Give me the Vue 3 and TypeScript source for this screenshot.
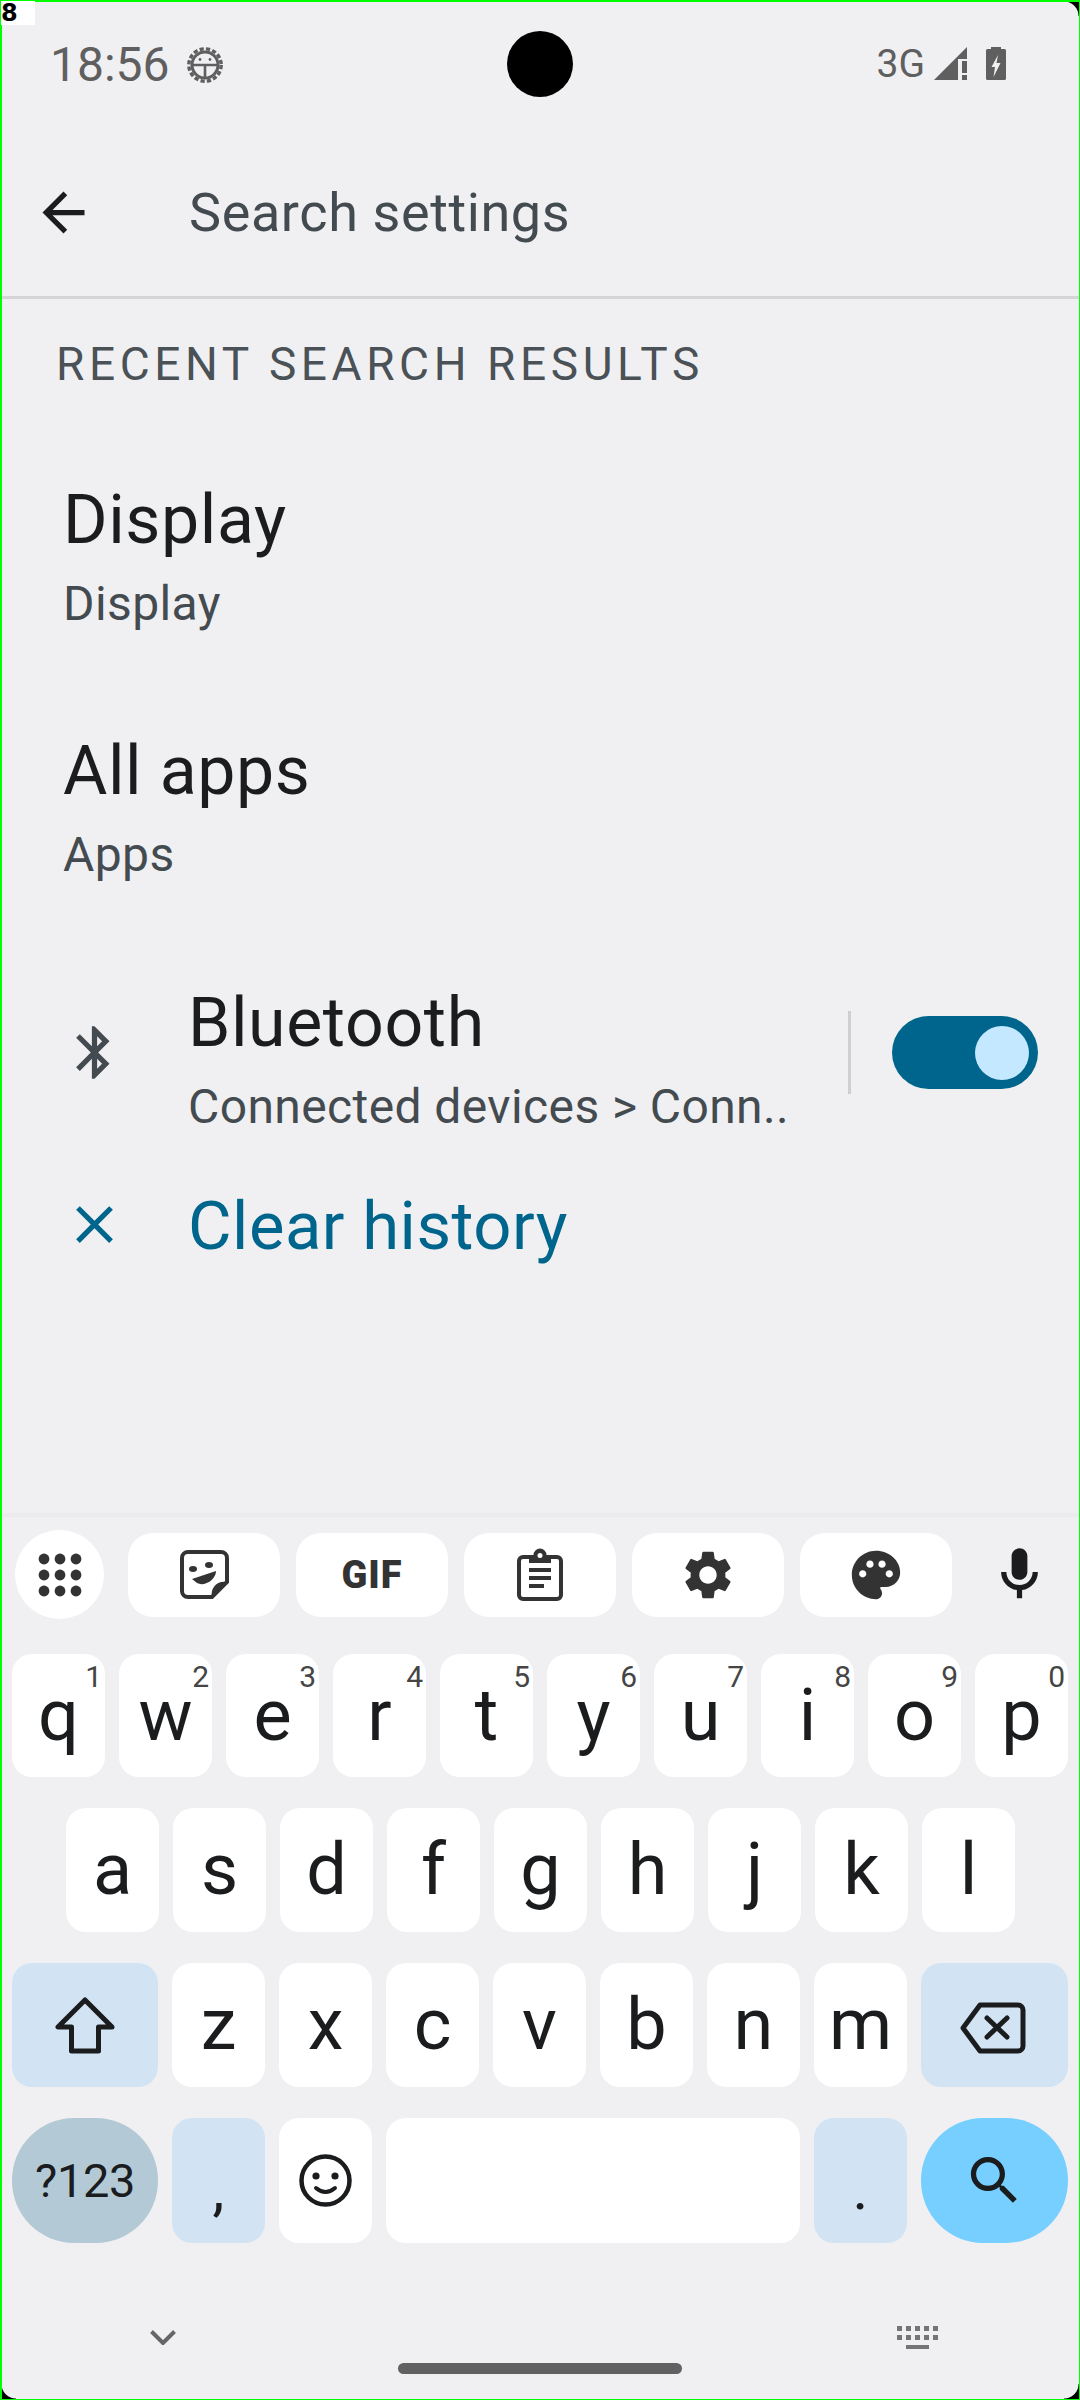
<script setup lang="ts">
const toolbarIcons = ['sticker', 'gif', 'clip', 'gear', 'palette']
const row1: [string, string][] = [['q','1'],['w','2'],['e','3'],['r','4'],['t','5'],['y','6'],['u','7'],['i','8'],['o','9'],['p','0']]
const row2 = ['a','s','d','f','g','h','j','k','l']
const row3 = ['z','x','c','v','b','n','m']
const kbColumns = [0, 9, 18, 27, 36]
</script>

<template>
  <div class="screen">
    <header class="status">
      <span class="time">18:56</span>
      <svg class="bug" viewBox="0 0 36 36" width="36" height="36">
        <circle cx="18" cy="18" r="16.2" fill="none" stroke="#5f5f5f" stroke-width="3.4" stroke-dasharray="4.2 2.2" />
        <circle cx="18" cy="18" r="13" fill="none" stroke="#5f5f5f" stroke-width="3" />
        <path d="M6 18H30M18 18V31" stroke="#5f5f5f" stroke-width="2.6" fill="none" />
        <circle cx="13" cy="12.5" r="1.4" fill="#5f5f5f" />
        <circle cx="23" cy="12.5" r="1.4" fill="#5f5f5f" />
      </svg>
      <span class="grow"></span>
      <span class="net">3G</span>
      <svg class="signal" viewBox="0 0 33 33" width="33" height="33">
        <path d="M0 33L33 0V12H24V33Z" fill="#5f5f5f" />
        <rect x="28" y="14" width="5" height="12" fill="#5f5f5f" />
        <rect x="28" y="28" width="5" height="5" fill="#5f5f5f" />
      </svg>
      <svg class="battery" viewBox="0 0 20 33" width="20" height="33">
        <path d="M5 0H15V2H18.500A1.500 1.500 0 0 1 20 3.500V31.500A1.500 1.500 0 0 1 18.500 33H1.500A1.500 1.500 0 0 1 0 31.500V3.500A1.500 1.500 0 0 1 1.500 2H5Z" fill="#5f5f5f" />
        <path d="M12 8L5.500 20H9L7.500 30L14.500 16H10.500Z" fill="#f0f0f2" />
      </svg>
    </header>

    <div class="topbar">
      <svg viewBox="0 0 24 24" width="63" height="63"><path d="M20 11H7.830l5.590-5.590L12 4l-8 8 8 8 1.410-1.410L7.830 13H20v-2z" fill="#1a1c1e" /></svg>
      <span class="search">Search settings</span>
    </div>
    <div class="rule"></div>

    <main class="content">
      <div class="section">RECENT SEARCH RESULTS</div>
      <div class="result">
        <div class="title">Display</div>
        <div class="sub">Display</div>
      </div>
      <div class="result">
        <div class="title">All apps</div>
        <div class="sub">Apps</div>
      </div>
      <div class="result with-icon">
        <svg viewBox="0 0 24 24" width="63" height="63"><path d="M17.710 7.710L12 2h-1v7.590L6.410 5 5 6.410 10.590 12 5 17.590 6.410 19 11 14.410V22h1l5.710-5.710-4.300-4.290 4.300-4.290zM13 5.830l1.880 1.880L13 9.590V5.830zm1.880 10.460L13 18.170v-3.760l1.880 1.880z" fill="#444b50" /></svg>
        <div class="texts">
          <div class="title">Bluetooth</div>
          <div class="sub">Connected devices &gt; Conn..</div>
        </div>
        <div class="vline"></div>
        <div class="toggle"><span class="thumb"></span></div>
      </div>
      <div class="clear">
        <svg viewBox="0 0 24 24" width="63" height="63"><path d="M19 6.410L17.590 5 12 10.590 6.410 5 5 6.410 10.590 12 5 17.590 6.410 19 12 13.410 17.590 19 19 17.590 13.410 12z" fill="#00658c" /></svg>
        <span class="clear-text">Clear history</span>
      </div>
    </main>

    <section class="kbd">
      <div class="toolbar">
        <div class="apps">
          <svg viewBox="0 0 44 44" width="44" height="44">
            <g fill="#333">
              <circle cx="6" cy="6" r="5.400" /><circle cx="22" cy="6" r="5.400" /><circle cx="38" cy="6" r="5.400" />
              <circle cx="6" cy="22" r="5.400" /><circle cx="22" cy="22" r="5.400" /><circle cx="38" cy="22" r="5.400" />
              <circle cx="6" cy="38" r="5.400" /><circle cx="22" cy="38" r="5.400" /><circle cx="38" cy="38" r="5.400" />
            </g>
          </svg>
        </div>
        <div class="pills">
          <div v-for="icon in toolbarIcons" :key="icon" class="pill">
            <svg v-if="icon === 'sticker'" viewBox="0 0 49 49" width="49" height="49">
              <path d="M8 2H41A6 6 0 0 1 47 8V32L32 47H8A6 6 0 0 1 2 41V8A6 6 0 0 1 8 2Z" fill="none" stroke="#333" stroke-width="4" />
              <path d="M47 32L32 47C30 38 37 30 47 32Z" fill="#333" />
              <ellipse cx="13" cy="19" rx="4" ry="3" fill="#333" />
              <ellipse cx="29" cy="15" rx="4" ry="3" fill="#333" />
              <path d="M12 29L36 21C36 30 24 37 17 33Z" fill="#333" />
            </svg>
            <span v-else-if="icon === 'gif'" class="gif">GIF</span>
            <svg v-else-if="icon === 'clip'" viewBox="0 0 46 53" width="46" height="53">
              <rect x="2" y="9" width="42" height="42" rx="4" fill="none" stroke="#333" stroke-width="4" />
              <path d="M12 7H16.500A6.500 6.500 0 0 1 29.500 7H34V15H12Z" fill="#333" />
              <circle cx="23" cy="7.500" r="2.500" fill="#fff" />
              <path d="M12 22H34M12 30H34M12 38H27" stroke="#333" stroke-width="4" fill="none" />
            </svg>
            <svg v-else-if="icon === 'gear'" viewBox="0 0 24 24" width="58" height="58"><path d="M19.140 12.940c.04-.3.06-.61.06-.94 0-.32-.02-.64-.07-.94l2.030-1.580c.18-.14.23-.41.12-.61l-1.920-3.320c-.12-.22-.37-.29-.59-.22l-2.390.96c-.5-.38-1.030-.7-1.620-.94l-.36-2.540c-.04-.24-.24-.41-.48-.41h-3.840c-.24 0-.43.17-.47.41l-.36 2.540c-.59.24-1.130.57-1.620.94l-2.390-.96c-.22-.08-.47 0-.59.22L2.740 8.870c-.12.21-.08.47.12.61l2.030 1.580c-.05.3-.09.63-.09.94s.02.64.07.94l-2.030 1.580c-.18.14-.23.41-.12.61l1.920 3.320c.12.22.37.29.59.22l2.390-.96c.5.38 1.030.7 1.620.94l.36 2.540c.05.24.24.41.48.41h3.840c.24 0 .44-.17.47-.41l.36-2.540c.59-.24 1.130-.56 1.620-.94l2.390.96c.22.08.47 0 .59-.22l1.920-3.320c.12-.22.07-.47-.12-.61l-2.010-1.580zM12 15.600c-1.980 0-3.600-1.620-3.600-3.600s1.620-3.600 3.600-3.600 3.600 1.620 3.600 3.600-1.620 3.600-3.600 3.600z" fill="#333" /></svg>
            <svg v-else viewBox="0 0 24 24" width="58" height="58"><path d="M12 2C6.490 2 2 6.490 2 12s4.490 10 10 10c1.380 0 2.500-1.120 2.500-2.500 0-.61-.23-1.200-.64-1.670-.08-.1-.13-.21-.13-.33 0-.28.22-.5.5-.5H16c3.310 0 6-2.690 6-6 0-4.960-4.490-9-10-9zm-5.500 11c-.83 0-1.500-.67-1.500-1.500S5.670 10 6.500 10s1.500.67 1.500 1.500S7.330 13 6.500 13zm3-4C8.670 9 8 8.330 8 7.500S8.670 6 9.500 6s1.500.67 1.500 1.500S10.330 9 9.500 9zm5 0c-.83 0-1.500-.67-1.500-1.500S13.670 6 14.500 6s1.500.67 1.500 1.500S15.330 9 14.500 9zm3 4c-.83 0-1.500-.67-1.500-1.500s.67-1.500 1.500-1.500 1.500.67 1.500 1.500-.67 1.500-1.500 1.500z" fill="#333" /></svg>
          </div>
        </div>
        <svg class="mic" viewBox="0 0 24 24" width="63" height="63"><path d="M12 14c1.660 0 3-1.340 3-3V5c0-1.660-1.340-3-3-3S9 3.340 9 5v6c0 1.660 1.340 3 3 3zM17 11c0 2.760-2.240 5-5 5s-5-2.240-5-5H5c0 3.530 2.610 6.430 6 6.920V21h2v-3.080c3.390-.49 6-3.390 6-6.920h-2z" fill="#1a1c1e" /></svg>
      </div>

      <div class="keys">
        <div class="row r1">
          <div v-for="k in row1" :key="k[0]" class="key">
            <span class="letter">{{ k[0] }}</span>
            <span class="hint">{{ k[1] }}</span>
          </div>
        </div>
        <div class="row r2">
          <div v-for="k in row2" :key="k" class="key"><span class="letter">{{ k }}</span></div>
        </div>
        <div class="row r3">
          <div class="key wide func">
            <svg viewBox="0 0 60 57" width="60" height="57">
              <path d="M30 3L3 30H16.500V54H43.500V30H57Z" fill="none" stroke="#1a1c1e" stroke-width="5" stroke-linejoin="round" />
            </svg>
          </div>
          <div v-for="k in row3" :key="k" class="key"><span class="letter">{{ k }}</span></div>
          <div class="key wide func">
            <svg class="backspace" viewBox="0 0 66 52" width="66" height="52">
              <path d="M20 3H58A5 5 0 0 1 63 8V44A5 5 0 0 1 58 49H20L3 26Z" fill="none" stroke="#1a1c1e" stroke-width="5" stroke-linejoin="round" />
              <path d="M27 16L47 35M47 16L27 35" fill="none" stroke="#1a1c1e" stroke-width="5" stroke-linecap="round" />
            </svg>
          </div>
        </div>
        <div class="row r4">
          <div class="key wide sym">?123</div>
          <div class="key func punct">,</div>
          <div class="key">
            <svg viewBox="0 0 53 53" width="53" height="53">
              <circle cx="26.500" cy="26.500" r="24" fill="none" stroke="#1a1c1e" stroke-width="4.500" />
              <circle cx="17" cy="22" r="3.600" fill="#1a1c1e" />
              <circle cx="36" cy="22" r="3.600" fill="#1a1c1e" />
              <path d="M17 34Q26.500 42 36 34" fill="none" stroke="#1a1c1e" stroke-width="4" stroke-linecap="round" />
            </svg>
          </div>
          <div class="key space"></div>
          <div class="key func punct">.</div>
          <div class="key wide go">
            <svg viewBox="0 0 24 24" width="63" height="63"><path d="M15.500 14h-.79l-.28-.27C15.410 12.590 16 11.110 16 9.500 16 5.910 13.090 3 9.500 3S3 5.910 3 9.500 5.910 16 9.500 16c1.610 0 3.090-.59 4.230-1.570l.27.28v.79l5 4.990L20.490 19l-4.990-5zm-6 0C7.010 14 5 11.990 5 9.500S7.010 5 9.500 5 14 7.010 14 9.500 11.990 14 9.500 14z" fill="#1a1c1e" /></svg>
          </div>
        </div>
      </div>

      <div class="nav-icons">
        <svg viewBox="0 0 26 15" width="26" height="15"><path d="M1.500 1.500L13 13L24.500 1.500" fill="none" stroke="#666" stroke-width="4" /></svg>
        <svg viewBox="0 0 41 23" width="41" height="23">
          <g fill="#757575">
            <rect v-for="x in kbColumns" :key="'a' + x" :x="x" y="0" width="5" height="5" />
            <rect v-for="x in kbColumns" :key="'b' + x" :x="x" y="9" width="5" height="5" />
            <rect x="9" y="19" width="23" height="4" />
          </g>
        </svg>
      </div>
      <div class="home"></div>
    </section>

    <div class="corner tl"></div>
    <div class="corner tr"></div>
    <div class="corner bl"></div>
    <div class="corner br"></div>
    <div class="frame"></div>
    <div class="tag">8</div>
  </div>
</template>

<style>
html, body { margin: 0; padding: 0; }
</style>

<style scoped>
.screen {
  position: relative;
  width: 1080px;
  height: 2400px;
  background: #f0f0f2;
  overflow: hidden;
  display: flex;
  flex-direction: column;
  font-family: Roboto, "Noto Sans", sans-serif;
  color: #1a1c1e;
}
.status {
  height: 128px;
  flex: none;
  display: flex;
  align-items: center;
  padding: 0 74px 0 50px;
  color: #5f5f5f;
}
.time { font-size: 48px; line-height: 1; margin-top: 2px; }
.bug { margin-left: 17px; margin-top: 2px; }
.grow { flex: 1; }
.status::after {
  content: "";
  position: absolute;
  left: 507px;
  top: 31px;
  width: 66px;
  height: 66px;
  border-radius: 50%;
  background: #000;
}
.net { font-size: 39px; line-height: 1; margin-right: 9px; margin-top: 1px; }
.signal { margin-right: 19px; margin-top: -1px; }
.battery { margin-top: -1px; }

.topbar {
  height: 168px;
  flex: none;
  display: flex;
  align-items: center;
  padding-left: 32px;
  gap: 94px;
}
.search { font-size: 54px; letter-spacing: 0.6px; color: #444b50; }
.rule { height: 3px; background: #d5d5d7; flex: none; }

.content { flex: 1; display: flex; flex-direction: column; min-height: 0; }
.section {
  height: 136px;
  flex: none;
  box-sizing: border-box;
  padding: 38px 0 0 56px;
  font-size: 46px;
  line-height: 54px;
  letter-spacing: 4.6px;
  color: #4a5157;
}
.result {
  height: 251px;
  flex: none;
  box-sizing: border-box;
  padding-left: 63px;
  padding-top: 2px;
  display: flex;
  flex-direction: column;
  justify-content: center;
}
.title { font-size: 68px; letter-spacing: 0.6px; line-height: 84px; color: #1a1c1e; white-space: nowrap; }
.sub { font-size: 48px; letter-spacing: 0.4px; line-height: 84px; color: #444b50; white-space: nowrap; }
.with-icon {
  flex-direction: row;
  align-items: center;
  justify-content: flex-start;
  padding-left: 63px;
  padding-right: 42px;
  padding-bottom: 22px;
}
.texts { flex: 1; margin-left: 62px; min-width: 0; margin-bottom: -24px; }
.vline { width: 3px; height: 83px; background: #cfcfd1; margin-right: 41px; }
.toggle {
  width: 146px;
  height: 73px;
  border-radius: 37px;
  background: #00658c;
  display: flex;
  align-items: center;
  justify-content: flex-end;
  padding-right: 9px;
  box-sizing: border-box;
}
.thumb { width: 54px; height: 54px; border-radius: 50%; background: #c3e8ff; }
.clear {
  height: 72px;
  flex: none;
  display: flex;
  align-items: center;
  padding-left: 63px;
  gap: 62px;
}
.clear-text { font-size: 67px; letter-spacing: 0.5px; color: #00658c; white-space: nowrap; margin-top: 3px; }

.kbd {
  height: 887px;
  flex: none;
  box-sizing: border-box;
  border-top: 4px solid #ebebed;
  background: #f0f0f2;
  display: flex;
  flex-direction: column;
  align-items: stretch;
}
.toolbar {
  display: flex;
  align-items: center;
  height: 89px;
  margin-top: 13px;
  padding-left: 15px;
  flex: none;
}
.apps {
  width: 89px;
  height: 89px;
  border-radius: 50%;
  background: #fff;
  display: flex;
  align-items: center;
  justify-content: center;
  flex: none;
}
.pills { display: flex; gap: 16px; margin-left: 24px; }
.pill {
  width: 152px;
  height: 84px;
  border-radius: 25px;
  background: #fff;
  display: flex;
  align-items: center;
  justify-content: center;
}
.gif { font-size: 38px; font-weight: 900; color: #333; letter-spacing: 1px; line-height: 1; }
.mic { margin-left: 36px; }

.keys { margin-top: 35px; display: flex; flex-direction: column; gap: 31px; flex: none; }
.row { display: flex; justify-content: flex-start; gap: 14px; padding-left: 12px; }
.r1 { height: 123px; }
.r2 { height: 124px; padding-left: 66px; }
.r3 { height: 124px; }
.r4 { height: 125px; }
.key {
  position: relative;
  width: 93px;
  height: 100%;
  border-radius: 20px;
  background: #fff;
  display: flex;
  align-items: center;
  justify-content: center;
  flex: none;
}
.letter { font-size: 72px; line-height: 1; color: #1a1c1e; }
.hint {
  position: absolute;
  top: 5px;
  right: 3px;
  font-size: 30px;
  line-height: 36px;
  color: #454545;
}
.wide { width: 146px; }
.row > .wide:last-child { width: 147px; }
.func { background: #d2e4f3; }
.sym { background: #b3cad6; border-radius: 62px; font-size: 47px; letter-spacing: -0.4px; }
.go { background: #76cfff; border-radius: 62px; }
.space { width: 414px; }
.punct { font-size: 60px; align-items: flex-end; line-height: 1; padding-bottom: 24px; box-sizing: border-box; }
.backspace { margin-top: 6px; margin-right: 4px; }

.nav-icons {
  display: flex;
  align-items: center;
  justify-content: space-between;
  height: 23px;
  margin-top: 83px;
  padding: 0 142px 0 150px;
  flex: none;
}
.home {
  width: 284px;
  height: 11px;
  border-radius: 6px;
  background: #616161;
  margin: 14px auto 0;
  flex: none;
}

.corner { position: absolute; width: 16px; height: 16px; }
.tl { left: 0; top: 0; background: radial-gradient(circle at 100% 100%, transparent 14px, #000 15px); }
.tr { right: 0; top: 0; background: radial-gradient(circle at 0 100%, transparent 14px, #000 15px); }
.bl { left: 0; bottom: 0; background: radial-gradient(circle at 100% 0, transparent 14px, #000 15px); }
.br { right: 0; bottom: 0; background: radial-gradient(circle at 0 0, transparent 14px, #000 15px); }
.frame {
  position: absolute;
  inset: 0;
  border-style: solid;
  border-color: #00ff00;
  border-width: 2px 1px 1px 2px;
  pointer-events: none;
}
.tag {
  position: absolute;
  left: 1px;
  top: 1px;
  width: 34px;
  height: 24px;
  background: #fff;
  color: #000;
  font-family: "DejaVu Sans", sans-serif;
  font-weight: 700;
  font-size: 24px;
  line-height: 25px;
  text-align: left;
}
</style>
